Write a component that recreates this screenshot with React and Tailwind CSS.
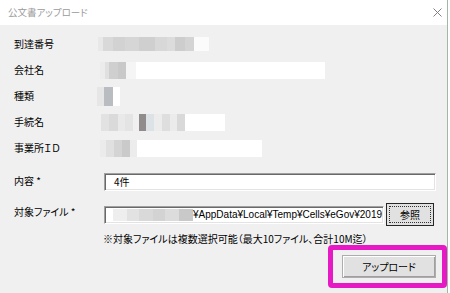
const rows = [
  {
    label: "到達番号",
    h: "h-[14px]",
    ml: "ml-[0px]",
    segs: [
      [5, "#e8e8e8"], [10, "#d9d9d9"], [12, "#d2d2d2"], [14, "#d6d6d6"], [16, "#cfcfcf"],
      [12, "#d8d8d8"], [8, "#dcdcdc"], [10, "#cdcdcd"], [9, "#d4d4d4"], [15, "#fbfbfb"],
    ],
  },
  {
    label: "会社名",
    h: "h-[17px]",
    ml: "ml-[2px]",
    segs: [
      [5, "#ececec"], [4, "#e0e0e0"], [9, "#cfcfcf"], [8, "#c9c9c9"], [10, "#f5f5f5"], [189, "#ffffff"],
    ],
  },
  {
    label: "種類",
    h: "h-[19px]",
    ml: "ml-[-1px]",
    segs: [[7, "#e6e6e6"], [9, "#b9bdc1"], [7, "#ffffff"]],
  },
  {
    label: "手続名",
    h: "h-[17px]",
    ml: "ml-[3px]",
    segs: [
      [8, "#e2e2e2"], [9, "#dadada"], [7, "#e9e9e9"], [8, "#e4e4e4"], [6, "#f0f0f0"], [7, "#908c8c"],
      [8, "#dde2e6"], [8, "#ececec"], [8, "#dedede"], [7, "#ebebeb"], [8, "#d9d9d9"], [40, "#ffffff"],
    ],
  },
  {
    label: "事業所ＩＤ",
    h: "h-[17px]",
    ml: "ml-[2px]",
    segs: [
      [6, "#ebebeb"], [8, "#e0e0e0"], [8, "#d4d4d4"], [8, "#cacaca"], [7, "#ececec"], [125, "#ffffff"],
    ],
  },
];

function Blur({ segs, h }) {
  return (
    <div className={`flex ${h}`}>
      {segs.map(([w, c], i) => (
        <div key={i} className="h-full" style={{ width: w, backgroundColor: c }} />
      ))}
    </div>
  );
}

const sunken =
  "border border-t-[#a0a0a0] border-l-[#a0a0a0] border-b-white border-r-white shadow-[inset_1px_1px_0_#696969,inset_-1px_-1px_0_#e3e3e3] bg-white";

export default function App() {
  return (
    <div className="flex h-[293px] w-[450px] bg-white font-['Noto_Sans_CJK_JP',sans-serif] text-[10px] text-black [font-feature-settings:'palt']">
      <div className="flex w-[448px] flex-col border-r border-[#a3b8a3]">
        {/* title bar */}
        <div className="flex h-[25px] shrink-0 items-center justify-between bg-white pl-[8px] pr-[5px]">
          <span className="text-[9.5px] leading-none text-[#9a9a9a]">公文書アップロード</span>
          <svg width="9" height="9" viewBox="0 0 9 9" className="mb-[1px]">
            <path d="M0.5 0.5 L8.5 8.5 M8.5 0.5 L0.5 8.5" stroke="#808080" strokeWidth="1" fill="none" />
          </svg>
        </div>

        <div className="flex flex-1 flex-col bg-[#f0f0f0] pl-[14px] pt-[6px]">
          {rows.map((r) => (
            <div key={r.label} className="flex h-[26px] items-center">
              <span className="w-[84px] leading-[12px]">{r.label}</span>
              <div className={r.ml}>
                <Blur segs={r.segs} h={r.h} />
              </div>
            </div>
          ))}

          {/* 内容 */}
          <div className="mt-[12px] flex items-start">
            <span className="w-[90px] pt-[2px] leading-[12px]">内容 *</span>
            <div className={`flex h-[18px] w-[332px] items-center pl-[9px] ${sunken}`}>
              <span className="leading-none">4件</span>
            </div>
          </div>

          {/* 対象ファイル */}
          <div className="mt-[12px] flex h-[23px] items-center">
            <span className="w-[90px] self-start pt-[3px] leading-[12px]">対象ファイル *</span>
            <div className={`flex h-[18px] w-[280px] items-center overflow-hidden pl-[8px] ${sunken}`}>
              <div className="flex h-[12px] shrink-0">
                <div className="h-full w-[14px] bg-[#eeeeee]" />
                <div className="h-full w-[12px] bg-[#e2e2e2]" />
                <div className="h-full w-[14px] bg-[#d9d9d9]" />
                <div className="h-full w-[12px] bg-[#d3d3d3]" />
                <div className="h-full w-[14px] bg-[#dcdcdc]" />
                <div className="h-full w-[14px] bg-[#c9c9c9]" />
              </div>
              <span className="shrink-0 whitespace-nowrap font-['Liberation_Sans',sans-serif] leading-none">
                ¥AppData¥Local¥Temp¥Cells¥eGov¥2019
              </span>
            </div>
            <button className="ml-[2px] flex h-[23px] w-[48px] items-center justify-center border border-[#262626] bg-[#e1e1e1] p-[2px]">
              <span className="flex h-full w-full items-center justify-center border border-dotted border-[#333]">
                参照
              </span>
            </button>
          </div>

          {/* note */}
          <div className="mt-[7px] pl-[89px] leading-[12px]">
            ※対象ファイルは複数選択可能（最大10ファイル、合計10M迄）
          </div>

          {/* upload */}
          <div className="mt-0 self-end rounded-[4px] border-[5px] border-[#e619c5] py-[5px] pl-[9px] pr-[6px]">
            <button className="flex h-[23px] w-[94px] items-center justify-center border border-[#adadad] bg-[#e1e1e1] shadow-[inset_1px_1px_0_#ffffff,inset_-1px_-1px_0_#a0a0a0]">
              アップロード
            </button>
          </div>
        </div>
      </div>
    </div>
  );
}
